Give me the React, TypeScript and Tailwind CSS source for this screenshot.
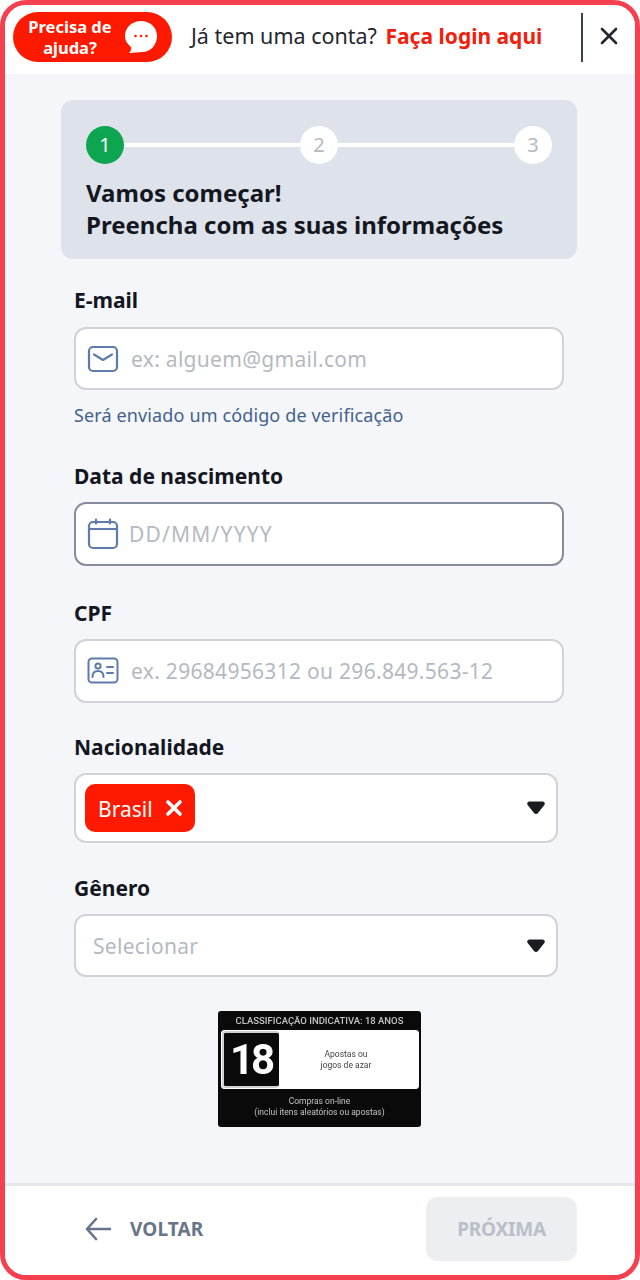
import React from "react";

const labelClass = "h-7 text-[21px] leading-[26px] font-bold text-[#14171f]";
const inputClass = "flex items-center bg-white rounded-xl border-2";
const placeholderClass = "pt-[2px] text-[21px] text-[#b5b9c1] tracking-[0.3px] whitespace-nowrap";

const Step: React.FC<{ n: number; active?: boolean }> = ({ n, active }) => (
	<div
		className={`w-[38px] h-[38px] shrink-0 rounded-full flex items-center justify-center text-[20px] ${
			active ? "bg-[#0da54f] text-white" : "bg-white text-[#b5b9c1]"
		}`}
	>
		{n}
	</div>
);

const MailIcon = () => (
	<svg width="32" height="28" viewBox="0 0 32 28" fill="none" stroke="#5f7bab" strokeWidth="2.2" strokeLinecap="round" strokeLinejoin="round">
		<rect x="2" y="2" width="28" height="24" rx="4" />
		<path d="M7 9.500l9 5.500 9-5.500" />
	</svg>
);

const CalendarIcon = () => (
	<svg width="32" height="32" viewBox="0 0 32 32" fill="none" stroke="#5f7bab" strokeWidth="2.2" strokeLinecap="round" strokeLinejoin="round">
		<rect x="2" y="4" width="28" height="26" rx="4" />
		<path d="M2 11h28M9 1.500v4M23 1.500v4" />
	</svg>
);

const IdCardIcon = () => (
	<svg width="32" height="28" viewBox="0 0 32 28" fill="none" stroke="#5f7bab" strokeWidth="2" strokeLinecap="round" strokeLinejoin="round">
		<rect x="1.500" y="1.500" width="29" height="24" rx="3.500" />
		<circle cx="11" cy="9" r="2.600" />
		<path d="M5.500 20c0-4 2.500-6 5.500-6s5.500 2 5.500 6M20 10h6M20 16h6" />
	</svg>
);

const Caret = () => (
	<svg width="18" height="14" viewBox="0 0 18 14" className="shrink-0">
		<path d="M2.500 .5h13c2 0 3 2 1.800 3.500L11 12c-1 1.300-3 1.300-4 0L.7 4C-.5 2.500.5.500 2.500.5z" fill="#1a1c20" />
	</svg>
);

const RatingBadge = () => (
	<div className="mt-[34px] ml-[144px] w-[203px] h-[116px] bg-[#0a0a0a] rounded-[3px] flex flex-col items-center pt-[3px] font-['Roboto',sans-serif] blur-[0.3px]">
		<div className="text-[9.5px] leading-[14px] text-[#c4c4c4] font-medium whitespace-nowrap">
			CLASSIFICAÇÃO INDICATIVA: 18 ANOS
		</div>
		<div className="mt-[2px] w-[198px] h-[59px] bg-white rounded-[3px] border border-white flex">
			<div className="w-[57px] h-full bg-[#0a0a0a] border-2 border-[#d0d0d0] border-r-0 rounded-[3px] flex items-center justify-center text-white text-[42px] font-bold leading-none tracking-[-3px]">
				18
			</div>
			<div className="flex-1 flex flex-col items-center justify-center text-[8.5px] leading-[11px] text-[#444] pr-1">
				<span>Apostas ou</span>
				<span>jogos de azar</span>
			</div>
		</div>
		<div className="mt-[7px] flex flex-col items-center text-[8.5px] leading-[11px] text-[#c4c4c4] whitespace-nowrap">
			<span>Compras on-line</span>
			<span>(inclui itens aleatórios ou apostas)</span>
		</div>
	</div>
);

export default function App() {
	return (
		<div className="w-[640px] h-[1280px] bg-white font-['Noto_Sans',sans-serif]">
			<div className="w-full h-full border-[5px] border-[#f6404f] rounded-[26px] overflow-hidden flex flex-col bg-[#f4f6f9]">
				<header className="h-[69px] shrink-0 bg-white flex items-start">
					<div className="mt-[7px] ml-[8px] w-[159px] h-[50px] rounded-full bg-[#fe1a00] flex items-center pl-[7px] text-white">
						<div className="w-[100px] text-center text-[16.5px] leading-[21px] font-bold whitespace-nowrap">
							Precisa de
							<br />
							ajuda?
						</div>
						<svg width="36" height="34" viewBox="0 0 36 34" className="ml-[3px]">
							<path d="M18 1c9 0 16 6.500 16 15s-6 16-15 16c-4 0-8 1-13 1 2-2 2.500-4 2-6-4-3-6-7-6-11C2 7.500 9 1 18 1z" fill="#fff" />
							<circle cx="12.500" cy="16" r="1.300" fill="#fe1a00" />
							<circle cx="18" cy="16" r="1.300" fill="#fe1a00" />
							<circle cx="23.500" cy="16" r="1.300" fill="#fe1a00" />
						</svg>
					</div>
					<div className="ml-[19px] mt-[15px] text-[21.5px] leading-8 text-[#24272e] whitespace-nowrap w-[390px]">
						Já tem uma conta? <span className="ml-[3px] text-[21px] font-bold text-[#f0200c]">Faça login aqui</span>
					</div>
					<div className="mt-[8px] w-[2px] h-[49px] bg-[#3c4048] shrink-0" />
					<svg width="18" height="18" viewBox="0 0 18 18" className="mt-[22px] ml-[17px]" stroke="#23262c" strokeWidth="2.600" strokeLinecap="round">
						<path d="M2 2l14 14M16 2L2 16" />
					</svg>
				</header>

				<main className="flex-1 pt-[26px]">
					<section className="ml-[56px] mr-[58px] h-[159px] rounded-xl bg-[#dee2ea] px-[25px] pt-[26px]">
						<div className="flex items-center">
							<Step n={1} active />
							<div className="flex-1 h-1 bg-white" />
							<Step n={2} />
							<div className="flex-1 h-1 bg-white" />
							<Step n={3} />
						</div>
						<h1 className="mt-[13px] text-[24px] leading-8 font-bold text-[#14171f] whitespace-nowrap">
							Vamos começar!
							<br />
							Preencha com as suas informações
						</h1>
					</section>

					<form className="px-[69px]">
						<div className={`mt-[28px] ${labelClass}`}>E-mail</div>
						<div className={`mt-[12px] h-[63px] w-[490px] pl-[11px] border-[#d0d3d8] ${inputClass}`}>
							<MailIcon />
							<span className={`ml-[12px] ${placeholderClass}`}>ex: alguem@gmail.com</span>
						</div>
						<div className="mt-[13px] h-6 text-[18px] leading-6 text-[#44618c] tracking-[0.13px] whitespace-nowrap">
							Será enviado um código de verificação
						</div>

						<div className={`mt-[36px] ${labelClass}`}>Data de nascimento</div>
						<div className={`mt-[11px] h-[64px] w-[490px] pl-[11px] border-[#868c9c] ${inputClass}`}>
							<CalendarIcon />
							<span className="ml-[10px] pt-[2px] text-[21px] text-[#b5b9c1] tracking-[1.2px] whitespace-nowrap">DD/MM/YYYY</span>
						</div>

						<div className={`mt-[34px] ${labelClass}`}>CPF</div>
						<div className={`mt-[11px] h-[64px] w-[490px] pl-[11px] border-[#d0d3d8] ${inputClass}`}>
							<IdCardIcon />
							<span className={`ml-[12px] ${placeholderClass}`}>ex. 29684956312 ou 296.849.563-12</span>
						</div>

						<div className={`mt-[31px] ${labelClass}`}>Nacionalidade</div>
						<div className={`mt-[11px] h-[70px] w-[484px] pl-[9px] pr-[11px] justify-between border-[#d0d3d8] ${inputClass}`}>
							<div className="h-12 w-[110px] rounded-[10px] bg-[#fe1a00] flex items-center pl-[13px] text-white">
								<span className="text-[21px] leading-[30px] mt-[2px]">Brasil</span>
								<svg width="16" height="16" viewBox="0 0 16 16" className="ml-[13px]" stroke="#fff" strokeWidth="3.600" strokeLinecap="round">
									<path d="M2 2l12 12M14 2L2 14" />
								</svg>
							</div>
							<Caret />
						</div>

						<div className={`mt-[32px] ${labelClass}`}>Gênero</div>
						<div className={`mt-[11px] h-[63px] w-[484px] pl-[17px] pr-[11px] justify-between border-[#d0d3d8] ${inputClass}`}>
							<span className={placeholderClass}>Selecionar</span>
							<Caret />
						</div>
						<RatingBadge />
					</form>
				</main>

				<footer className="h-[92px] shrink-0 bg-white border-t-[3px] border-[#e5e7eb] flex items-start justify-between pl-[80px] pr-[58px]">
					<div className="mt-[31px] flex items-center h-6">
						<svg width="26" height="24" viewBox="0 0 26 24" fill="none" stroke="#687489" strokeWidth="2.600" strokeLinecap="round" strokeLinejoin="round">
							<path d="M25 12H2M11 2L2 12l9 10" />
						</svg>
						<span className="ml-[19px] text-[19px] font-bold text-[#687489] tracking-[0.1px]">VOLTAR</span>
					</div>
					<div className="mt-[11px] w-[151px] h-[64px] rounded-xl bg-[#eceef1] flex items-center justify-center text-[19px] font-bold text-[#b9bec8] tracking-[-0.2px]">
						PRÓXIMA
					</div>
				</footer>
			</div>
		</div>
	);
}
